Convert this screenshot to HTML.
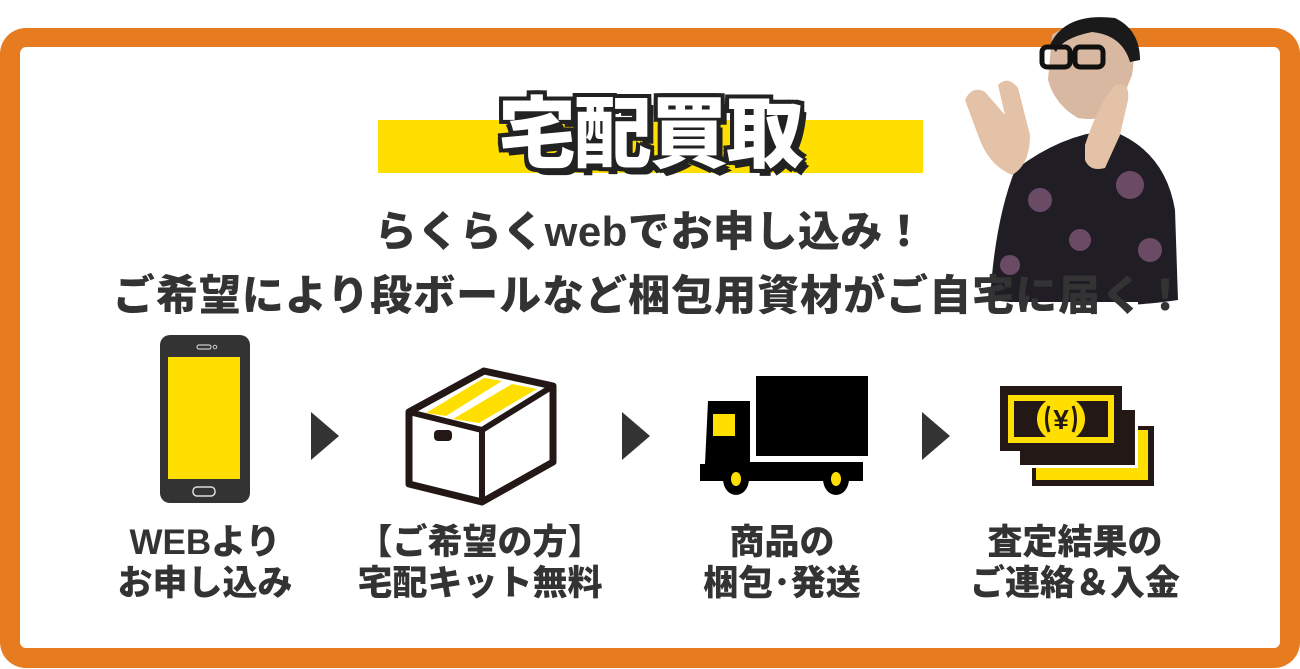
<!DOCTYPE html>
<html><head><meta charset="utf-8"><style>
*{margin:0;padding:0;box-sizing:border-box}
body{width:1300px;height:669px;background:#fff;position:relative;overflow:hidden;font-family:"Liberation Sans","Noto Sans CJK JP",sans-serif;font-weight:bold;color:#333}
.frame{position:absolute;left:0;top:28px;width:1300px;height:640px;border:20px solid #e77b1f;border-top-width:19px;border-radius:26px;background:#fff}
.bar{position:absolute;left:378px;top:120px;width:545px;height:53px;background:#ffdf00}
.title{position:absolute;left:0;width:1300px;top:72px;text-align:center;font-size:78px;font-weight:900;color:#fff;letter-spacing:-2px;
 text-shadow:-4px -4px 0 #222,4px -4px 0 #222,-4px 4px 0 #222,4px 4px 0 #222,0 -4px 0 #222,0 4px 0 #222,-4px 0 0 #222,4px 0 0 #222,6px 7px 0 #222}
.l{position:absolute;left:0;width:1300px;text-align:center;font-weight:900;color:#333;white-space:nowrap}
.lab{position:absolute;width:320px;text-align:center;font-size:35px;line-height:41px;font-weight:900;color:#333}
.arr{position:absolute;width:0;height:0;border-top:24px solid transparent;border-bottom:24px solid transparent;border-left:28px solid #333}
</style></head><body>
<div class="frame"></div>

<svg style="position:absolute;left:950px;top:0" width="240" height="318" viewBox="950 0 240 318">
 <path d="M1052 35 Q1080 15 1120 25 Q1138 45 1132 75 L1118 110 Q1100 122 1078 118 Q1055 105 1048 80 Z" fill="#d8b8a0"/>
 <path d="M1050 45 Q1065 12 1115 18 Q1140 30 1140 60 L1130 62 Q1122 35 1092 32 Q1062 38 1056 52 Z" fill="#1a1a1a"/>
 <rect x="1042" y="47" width="28" height="20" rx="5" fill="none" stroke="#111" stroke-width="5"/>
 <rect x="1075" y="47" width="28" height="20" rx="5" fill="none" stroke="#111" stroke-width="5"/>
 <path d="M1015 170 Q1060 135 1110 130 Q1165 150 1175 210 L1178 300 Q1100 312 990 300 Q995 220 1015 170Z" fill="#201d25"/>
 <circle cx="1040" cy="200" r="12" fill="#6b4a66"/><circle cx="1130" cy="185" r="14" fill="#6b4a66"/><circle cx="1150" cy="250" r="12" fill="#6b4a66"/><circle cx="1010" cy="265" r="10" fill="#6b4a66"/><circle cx="1080" cy="240" r="11" fill="#6b4a66"/>
 <path d="M965 100 Q972 85 985 92 L1005 115 L998 85 Q1008 75 1018 88 L1030 135 Q1030 165 1012 175 Q988 165 978 135 Z" fill="#e3c2a8"/>
 <path d="M1085 145 Q1098 105 1115 85 Q1130 80 1128 100 L1120 135 L1105 168 Q1090 172 1085 160Z" fill="#e3c2a8"/>
 <rect x="998" y="302" width="140" height="16" fill="#fff"/>
</svg>

<div class="bar"></div>
<div class="title">宅配買取</div>
<div class="l" style="top:198px;font-size:42px;letter-spacing:0.5px">らくらくwebでお申し込み！</div>
<div class="l" style="top:262px;font-size:42px;letter-spacing:1px">ご希望により段ボールなど梱包用資材がご自宅に届く！</div>

<svg style="position:absolute;left:160px;top:335px" width="90" height="168" viewBox="0 0 90 168">
 <rect x="0" y="0" width="90" height="168" rx="10" fill="#333"/>
 <rect x="8" y="22" width="72" height="122" fill="#ffdf00"/>
 <rect x="37" y="10" width="14" height="4" rx="2" fill="none" stroke="#ccc" stroke-width="1.2"/>
 <circle cx="55" cy="12" r="1.8" fill="none" stroke="#ccc"/>
 <rect x="33" y="152" width="22" height="9" rx="4" fill="none" stroke="#ddd" stroke-width="1.5"/>
</svg>
<div class="arr" style="left:311px;top:412px"></div>
<svg style="position:absolute;left:405px;top:367px" width="152" height="140" viewBox="-1 -1 152 140">
 <path d="M3 44 L78 3 L147 18 L147 94 L76 134 L3 116 Z" fill="#fff" stroke="#231815" stroke-width="7" stroke-linejoin="round"/>
 <path d="M3 44 L76 62 L147 18 M76 62 L76 134" fill="none" stroke="#231815" stroke-width="6"/>
 <path d="M20 45 L40 48 L96 13 L78 10 Z" fill="#ffdf00"/>
 <path d="M47 51 L73 55 L131 21 L106 16 Z" fill="#ffdf00"/>
 <rect x="28" y="62" width="18" height="11" rx="4" fill="#231815"/>
</svg>
<div class="arr" style="left:622px;top:412px"></div>
<svg style="position:absolute;left:700px;top:376px" width="168" height="120" viewBox="0 0 168 120">
 <rect x="56" y="0" width="112" height="80" fill="#000"/>
 <path d="M8 25 L50 25 L50 86 L163 86 L163 105 L0 105 L0 88 L5 88 Z" fill="#000"/>
 <rect x="13" y="38" width="22" height="22" fill="#ffdf00"/>
 <ellipse cx="36" cy="103" rx="13" ry="16" fill="#000"/><ellipse cx="36" cy="103" rx="5" ry="7" fill="#ffdf00"/>
 <ellipse cx="136" cy="103" rx="13" ry="16" fill="#000"/><ellipse cx="136" cy="103" rx="5" ry="7" fill="#ffdf00"/>
</svg>
<div class="arr" style="left:922px;top:412px"></div>
<svg style="position:absolute;left:1000px;top:386px" width="155" height="100" viewBox="0 0 155 100">
 <rect x="32" y="40" width="122" height="60" fill="#231815"/>
 <rect x="36" y="44" width="112" height="50" fill="#ffdf00"/>
 <rect x="16" y="22" width="122" height="60" fill="#fff"/>
 <rect x="20" y="24" width="115" height="55" fill="#231815"/>
 <rect x="0" y="0" width="122" height="65" fill="#231815"/>
 <rect x="8" y="9" width="106" height="48" fill="#ffdf00"/>
 <rect x="14" y="15" width="94" height="36" fill="#231815"/>
 <ellipse cx="61" cy="33" rx="24" ry="23" fill="#ffdf00"/>
 <path d="M49 20 Q44 33 49 46 M73 20 Q78 33 73 46" fill="none" stroke="#231815" stroke-width="3"/>
 <text x="61" y="43" text-anchor="middle" font-size="28" font-weight="900" fill="#231815" font-family="Liberation Sans,sans-serif">¥</text>
</svg>

<div class="lab" style="left:45px;top:522px">WEBより<br>お申し込み</div>
<div class="lab" style="left:320px;top:522px">【ご希望の方】<br>宅配キット無料</div>
<div class="lab" style="left:622px;top:522px">商品の<br>梱包･発送</div>
<div class="lab" style="left:915px;top:522px">査定結果の<br>ご連絡＆入金</div>
</body></html>
